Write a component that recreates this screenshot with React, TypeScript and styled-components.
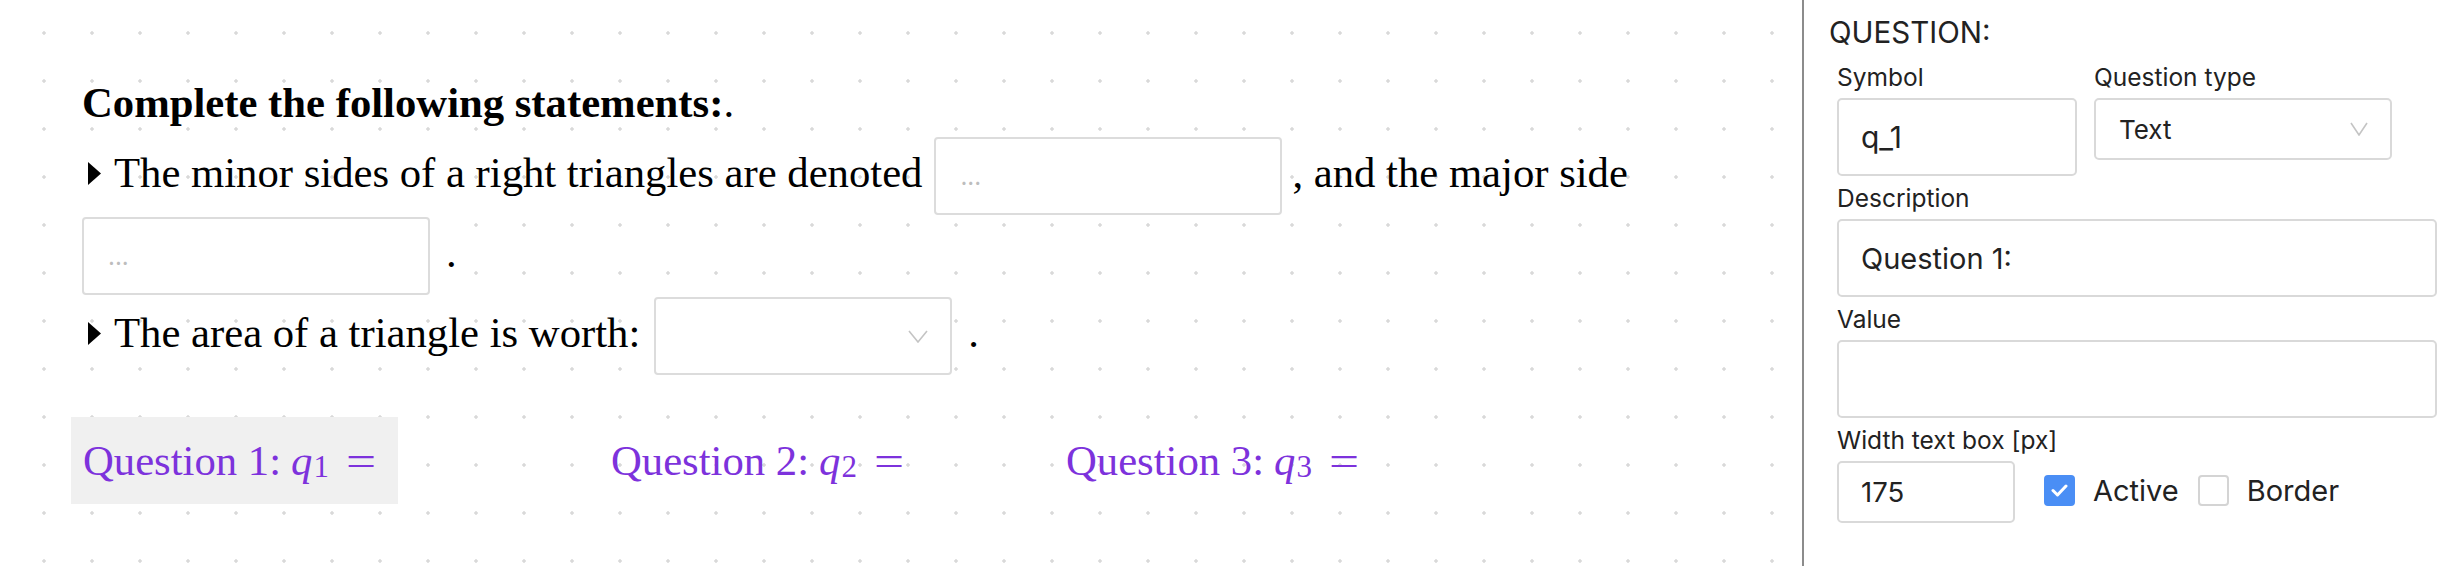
import React from "react";
import styled, { createGlobalStyle } from "styled-components";

const GlobalStyle = createGlobalStyle`
  html, body {
    margin: 0;
    padding: 0;
    background: #fff;
  }
  * {
    box-sizing: border-box;
  }
`;

const Page = styled.div`
  display: flex;
  width: 2464px;
  height: 566px;
  overflow: hidden;
`;

// editor canvas with a dotted grid
const Canvas = styled.main`
  flex: 0 0 1802px;
  padding: 81px 0 0 82px;
  background-color: #fff;
  background-image: radial-gradient(circle, #d9d9d9 1.4px, transparent 2.1px);
  background-size: 48px 48px;
  background-position: 20px 9px;
  font-family: "Liberation Serif", "Times New Roman", serif;
  font-size: 42.7px;
  color: #000;
`;

const Title = styled.h2`
  margin: 0 0 12px;
  font-size: inherit;
  font-weight: bold;
  line-height: 44px;
`;

const Row = styled.div`
  display: flex;
  align-items: flex-start;
  height: 78px;
  margin-bottom: 2px;
`;

const Text = styled.span<{ $gap?: number }>`
  margin-top: 14px;
  margin-left: ${({ $gap }) => $gap ?? 0}px;
  line-height: 44px;
  white-space: pre;
`;

const Bullet = styled.svg`
  flex: none;
  margin: 25px 13px 0 6px;
`;

const BlankInput = styled.input<{ $gap?: number }>`
  width: 348px;
  height: 78px;
  margin-left: ${({ $gap }) => $gap ?? 0}px;
  padding: 0 24px;
  border: 2px solid #dcdcdc;
  border-radius: 4px;
  background: #fff;
  font-family: Inter, "Liberation Sans", sans-serif;
  font-size: 24px;
  outline: none;

  &::placeholder {
    color: #bdbdbd;
  }
`;

const BlankSelect = styled.div<{ $gap?: number }>`
  display: flex;
  align-items: center;
  justify-content: flex-end;
  width: 298px;
  height: 78px;
  margin-left: ${({ $gap }) => $gap ?? 0}px;
  padding-right: 22px;
  border: 2px solid #dcdcdc;
  border-radius: 4px;
  background: #fff;
`;

const QuestionRow = styled.div`
  display: grid;
  grid-template-columns: 528px 455px auto;
  margin: 42px 0 0 -11px;
`;

const QuestionChip = styled.div<{ $selected?: boolean }>`
  justify-self: start;
  display: flex;
  align-items: center;
  height: 87px;
  padding: 0 25px 0 12px;
  background: ${({ $selected }) => ($selected ? "#f0f0f0" : "transparent")};
  color: #7d32dc;
  line-height: 44px;
  white-space: pre;
`;

const MathVar = styled.i`
  margin-left: 10px;
  font-style: italic;
`;

const MathSub = styled.sub`
  position: relative;
  top: 6px;
  margin-left: 1px;
  font-size: 31px;
  vertical-align: baseline;
`;

const MathRel = styled.span`
  display: inline-block;
  margin-left: 20px;
  transform: scaleX(1.25);
`;

const Panel = styled.aside`
  flex: 1;
  padding: 14px 0 0 25px;
  border-left: 2px solid #8c8c8c;
  font-family: Inter, "Liberation Sans", sans-serif;
  color: #222;
`;

const PanelTitle = styled.div`
  margin-bottom: 12px;
  font-size: 29.5px;
  line-height: 36px;
`;

const Fields = styled.div`
  display: flex;
  flex-direction: column;
  gap: 7px;
  margin-left: 8px;
`;

const FieldLine = styled.div`
  display: flex;
  align-items: flex-start;
  gap: 17px;
`;

const Field = styled.label`
  display: flex;
  flex-direction: column;
`;

const Label = styled.span`
  margin-bottom: 6px;
  font-size: 24.5px;
  line-height: 30px;
`;

const TextBox = styled.input<{ $w: number; $h?: number; $size?: number }>`
  width: ${({ $w }) => $w}px;
  height: ${({ $h }) => $h ?? 78}px;
  padding: 0 22px;
  border: 2px solid #d9d9d9;
  border-radius: 5px;
  background: #fff;
  font-family: inherit;
  font-size: ${({ $size }) => $size ?? 29}px;
  color: #222;
  outline: none;
`;

const SelectBox = styled.div`
  display: flex;
  align-items: center;
  justify-content: space-between;
  width: 298px;
  height: 62px;
  padding: 0 22px 0 23px;
  border: 2px solid #d9d9d9;
  border-radius: 5px;
  font-size: 26px;
`;

const WidthLine = styled.div`
  display: flex;
  align-items: center;
`;

const Options = styled.div`
  display: flex;
  align-items: center;
  margin: 0 0 4px 29px;
`;

const Check = styled.span<{ $on?: boolean }>`
  display: flex;
  align-items: center;
  justify-content: center;
  width: 31px;
  height: 31px;
  border: 2px solid ${({ $on }) => ($on ? "#4a8ef5" : "#d4d4d4")};
  border-radius: 4px;
  background: ${({ $on }) => ($on ? "#4a8ef5" : "#fff")};
`;

const CheckLabel = styled.span`
  margin: 0 19px 0 18px;
  font-size: 29px;
`;

const Chevron = ({ w = 20, h = 13 }: { w?: number; h?: number }) => (
  <svg width={w} height={h} viewBox={`0 0 ${w} ${h}`}>
    <polyline
      points={`1,1 ${w / 2},${h - 1} ${w - 1},1`}
      fill="none"
      stroke="#c4c4c4"
      strokeWidth="1.6"
    />
  </svg>
);

const Triangle = () => (
  <Bullet width="13" height="23" viewBox="0 0 13 23">
    <polygon points="0,0 13,11.5 0,23" fill="#000" />
  </Bullet>
);

const questions = [
  { n: 1, selected: true },
  { n: 2 },
  { n: 3 },
];

export default function App() {
  return (
    <>
      <GlobalStyle />
      <Page>
        <Canvas>
          <Title>
            Complete the following statements:<span style={{ fontWeight: "normal" }}>.</span>
          </Title>
          <Row>
            <Triangle />
            <Text>The minor sides of a right triangles are denoted</Text>
            <BlankInput $gap={12} placeholder="..." readOnly />
            <Text $gap={10}>, and the major side</Text>
          </Row>
          <Row>
            <BlankInput placeholder="..." readOnly />
            <Text $gap={16}>.</Text>
          </Row>
          <Row>
            <Triangle />
            <Text>The area of a triangle is worth:</Text>
            <BlankSelect $gap={14}>
              <Chevron />
            </BlankSelect>
            <Text $gap={16}>.</Text>
          </Row>
          <QuestionRow>
            {questions.map((q) => (
              <QuestionChip key={q.n} $selected={q.selected}>
                Question {q.n}:
                <MathVar>q</MathVar>
                <MathSub>{q.n}</MathSub>
                <MathRel>=</MathRel>
              </QuestionChip>
            ))}
          </QuestionRow>
        </Canvas>

        <Panel>
          <PanelTitle>QUESTION:</PanelTitle>
          <Fields>
            <FieldLine>
              <Field>
                <Label>Symbol</Label>
                <TextBox $w={240} $size={30} defaultValue="q_1" readOnly />
              </Field>
              <Field>
                <Label>Question type</Label>
                <SelectBox>
                  <span>Text</span>
                  <Chevron w={18} h={14} />
                </SelectBox>
              </Field>
            </FieldLine>
            <Field>
              <Label>Description</Label>
              <TextBox $w={600} defaultValue="Question 1:" readOnly />
            </Field>
            <Field>
              <Label>Value</Label>
              <TextBox $w={600} readOnly />
            </Field>
            <Field>
              <Label>Width text box [px]</Label>
              <WidthLine>
                <TextBox $w={178} $h={62} $size={27.5} defaultValue="175" readOnly />
                <Options>
                  <Check $on>
                    <svg width="17" height="13" viewBox="0 0 17 13">
                      <polyline
                        points="2,6.5 6.5,11 15,2"
                        fill="none"
                        stroke="#fff"
                        strokeWidth="3"
                        strokeLinecap="round"
                        strokeLinejoin="round"
                      />
                    </svg>
                  </Check>
                  <CheckLabel>Active</CheckLabel>
                  <Check />
                  <CheckLabel>Border</CheckLabel>
                </Options>
              </WidthLine>
            </Field>
          </Fields>
        </Panel>
      </Page>
    </>
  );
}
